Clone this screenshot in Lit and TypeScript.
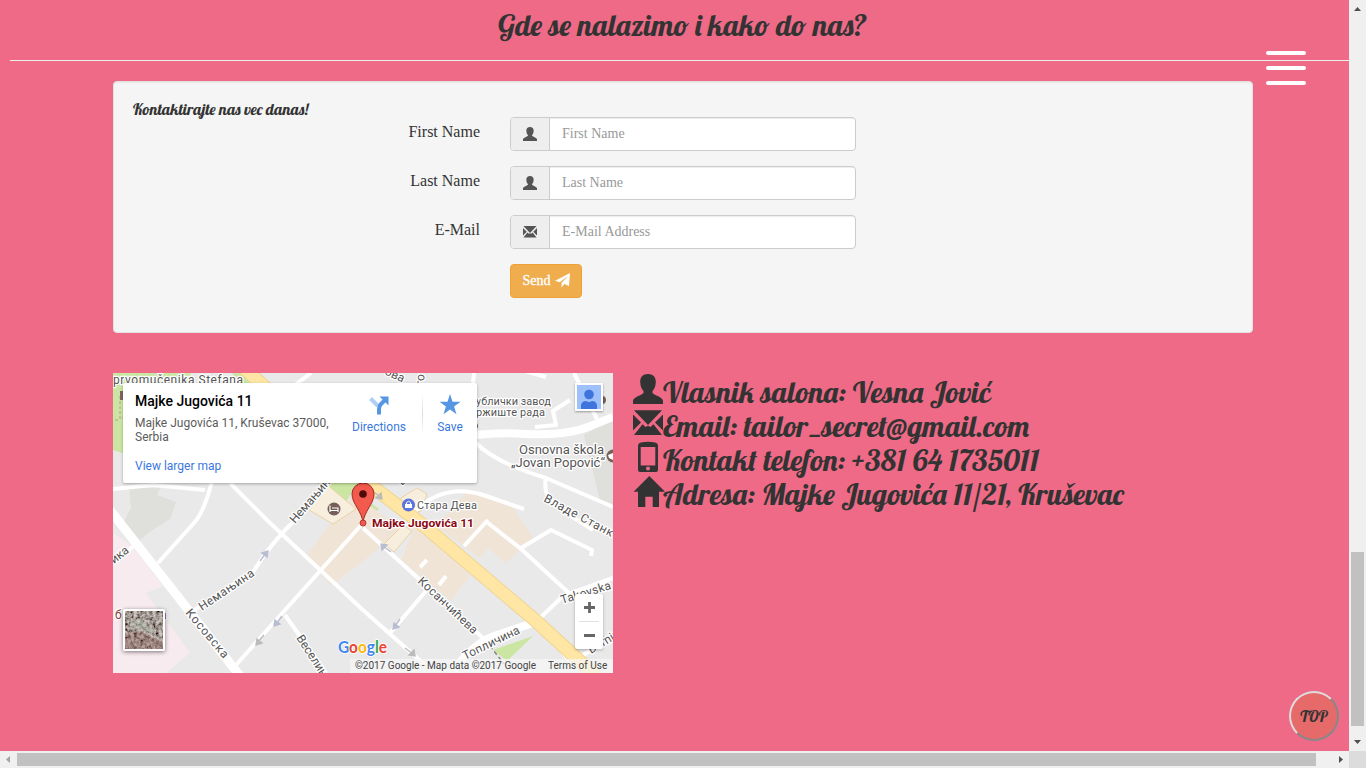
import { LitElement, html, svg, css } from "lit";
import { customElement } from "lit/decorators.js";

const userIcon = svg`<path d="M15 0C20 0 22.800 3 22.800 7.500C22.800 12 21.500 15 19.500 17V19C19.500 20.500 30 23 30 27V30H0V27C0 23 10.500 20.500 10.500 19V17C8.500 15 7.200 12 7.200 7.500C7.200 3 10 0 15 0Z"/>`;
const mailIcon = svg`<path d="M1 2.2H29L15 17ZM0 6.5L8 14.5L0 22.5ZM30 6.5V22.5L22 14.5ZM1 27L9.5 16.3L12.6 19L15 17.8L17.4 19L20.5 16.3L29 27Z"/>`;
const phoneIcon = svg`<path fill-rule="evenodd" d="M8 .5Q15-.8 22 .5Q25 1.2 25 4V28Q25 30 23 30H7Q5 30 5 28V4Q5 1.2 8 .5ZM7.7 5V23.5H22.3V5ZM15 24.6A2 2 0 1 0 15 28.6A2 2 0 1 0 15 24.6Z"/>`;
const homeIcon = svg`<path d="M16.3 0L32 15.7H26V31H19.7V20.7H12.3V31H5V15.7H.6Z"/>`;

@customElement("street-map")
class StreetMap extends LitElement {
  static styles = css`
    :host { display: block; position: relative; width: 500px; height: 300px; overflow: hidden; font-family: Roboto, sans-serif; }
    .base { display: block; }
    .halo { paint-order: stroke; stroke: #fff; stroke-width: 2.5px; stroke-linejoin: round; }
    .card { position: absolute; left: 10px; top: 10px; width: 354px; height: 100px; box-sizing: border-box; padding: 10px 0 0 12px; background: #fff; border-radius: 2px; box-shadow: 0 1px 3px rgba(0,0,0,.3); display: flex; }
    .place { width: 203px; font-size: 12px; line-height: 14px; color: #5b5b5b; }
    .name { font-size: 14px; line-height: 17px; font-weight: 500; color: #000; margin-bottom: 6px; }
    .link { color: #3a78e0; }
    .more { margin-top: 15px; }
    .act { width: 82px; display: flex; flex-direction: column; align-items: center; font-size: 12px; line-height: 14px; color: #3a78e0; }
    .act svg { margin: 1px 0 5px; }
    .save { width: 54px; }
    .rule { width: 1px; height: 42px; margin-left: 2px; background: linear-gradient(#fff, #ddd 50%, #fff); }
    .avatar { position: absolute; left: 462px; top: 10px; border: 2px solid #fff; box-shadow: 0 1px 2px rgba(0,0,0,.35); }
    .avatar svg, .sat svg { display: block; }
    .sat { position: absolute; left: 10px; top: 236px; border: 2px solid #fff; border-radius: 2px; box-shadow: 0 1px 4px rgba(0,0,0,.5); }
    .zoom { position: absolute; left: 462px; top: 221px; width: 28px; height: 55px; background: #fff; border-radius: 2px; box-shadow: 0 1px 3px rgba(0,0,0,.3); }
    .legal { position: absolute; right: 0; bottom: 0; height: 14px; display: flex; background: rgba(245,245,245,.75); font-size: 10px; line-height: 14px; color: #444; white-space: nowrap; }
    .legal span { box-sizing: border-box; padding-left: 5px; width: 192px; }
    .legal .terms { width: 71px; padding-left: 6px; }
  `;
  render() {
    return html`
      <svg class="base" width="500" height="300" viewBox="0 0 500 300">
        <rect width="500" height="300" fill="#e9e9e9"/>
        <path fill="#f8ebf0" d="M0 160L18 172L50 213L33 220L77 280L53 300H0Z"/>
        <path fill="#cbe6a3" d="M0 0H78L72 12H12V81L0 77ZM119 0H130L142 12H128ZM204 110H245L232 130Z"/>
        <path fill="#cbe6a3" d="M253 126L266 136L253 147ZM380 277L420 263L394 288ZM424 245L433 249L462 274L456 275Z"/>
        <path fill="#dfe0db" d="M16 115H47L44 122L63 129L57 146L38 158L25 169L10 150L18 135ZM471 62L500 46V132H488Z"/>
        <path fill="#f0e4d7" d="M240 120L290 157L218 213L193 183ZM304 148L357 203L338 228L288 187ZM335 140L357 116L400 135L420 165L393 190L375 175L367 185L322 152Z"/>
        <path fill="#f7eede" stroke="#ead4a8" d="M212 110L243 136L220 151L196 137ZM288 125L304 115L314 121L308 138L289 145ZM271 171L290 152L299 158L281 179Z"/>
        <g fill="none" stroke="#fff" stroke-width="4" stroke-linejoin="round">
          <path stroke-width="9" d="M-3 137L8 151L127 303"/>
          <path d="M0 116L40 112L92 117M99 108Q91 140 80 151L45 190M117 110L157 150L250 237L312 292M80 238L140 199Q158 170 182 147L216 109"/>
          <path d="M123 292L207 198L250 150M172 242L213 300M250 155L307 207L370 265M313 218L277 260L272 257M0 190L22 172M182 12L198 0"/>
          <path stroke-width="8" d="M340 298Q360 271 381 263L423 249"/>
          <path d="M423 249L450 223L500 205M375 150L407 175L457 221M351 173L375 147M408 175L438 157L479 177L478 183M445 274L458 290L500 263"/>
          <path stroke-width="8" d="M358 63Q380 59 413 61Q455 63 480 52L500 44"/>
          <path d="M363 70Q383 90 433 105L500 134M433 103Q429 126 447 136L480 157M422 54L443 52L440 38L457 27M461 0L484 46M360 10L361 0M412-2L433 4M293 145L308 133Q335 111 370 122L411 136M307 194L314 187M326 212L333 203"/>
        </g>
        <path fill="none" stroke="#f0d492" stroke-width="14" d="M130-6L260 114L310 152L423 248L485 305"/>
        <path fill="none" stroke="#ffe6a4" stroke-width="12" d="M130-6L260 114L310 152L423 248L485 305"/>
        <path d="M377 273L391 291" stroke="#888" stroke-width="1.5" stroke-dasharray="4 3"/>
        <g fill="#b9bdd2" stroke="#b9bdd2" stroke-width="1.4">
          <path d="M147 188L153 180M149 180L155 178L154 184ZM169 243L163 251M167 251L161 253L162 247ZM287 246L282 253M286 254L280 256L281 250ZM278 179L270 173M269 177L268 171L274 172Z"/>
          <path stroke="#bbb" fill="#bbb" d="M151 262L145 269M149 270L143 272L144 266ZM292 275L300 281M301 277L302 283L296 282ZM261 119L267 124M268 120L269 126L263 125Z"/>
        </g>
        <path d="M12 17V45M7 23V47M2 47H7M12 45H7" stroke="#b5a386" stroke-dasharray="3 2" fill="none"/>
        <rect x="7" y="18" width="6" height="9" fill="#806560"/>
        <g class="halo" font-size="12" fill="#555">
          <text x="0" y="11" textLength="130">prvomučenika Stefana</text>
          <text font-size="11" x="363" y="32" textLength="75">ублички завод</text>
          <text font-size="11" x="363" y="43" textLength="69">ржиште рада</text>
          <text x="406" y="81" textLength="85" lengthAdjust="spacingAndGlyphs">Osnovna škola</text>
          <text x="398" y="94" textLength="94" lengthAdjust="spacingAndGlyphs">„Jovan Popović“</text>
          <text font-size="11" x="304" y="136" textLength="60">Стара Дева</text>
          <text transform="translate(182 151) rotate(-49)">Немањина</text>
          <text transform="translate(89 238) rotate(-34)" textLength="64">Немањина</text>
          <text transform="translate(72 240) rotate(50)" textLength="60">Косовска</text>
          <text transform="translate(183 265) rotate(57)">Веселинова</text>
          <text transform="translate(304 209) rotate(43)" textLength="77">Косанчићева</text>
          <text transform="translate(352 287) rotate(-26)" textLength="62">Топличина</text>
          <text transform="translate(430 128) rotate(28)" textLength="77">Владе Станк</text>
          <text transform="translate(449 231) rotate(-17)" textLength="52">Takovska</text>
          <text transform="translate(478 281) rotate(-31)">Darnina</text>
          <text transform="translate(1 191) rotate(-38)">ика</text>
          <text x="2" y="246" fill="#8a463d">б</text><text x="47" y="246" fill="#8a463d">а</text>
          <text transform="translate(271 1) rotate(25)">ова</text>
          <text transform="translate(310 20) rotate(-85)">ого</text>
          <text transform="translate(289 113) rotate(-45)">В</text>
        </g>
        <g fill="#765f59"><circle cx="221" cy="136" r="6.5"/><circle cx="500" cy="83" r="6.5"/><circle cx="489" cy="27" r="4"/><circle cx="362" cy="53" r="3"/></g>
        <path d="M217 132.500V139M217 137.500H225V139M219 135H225V137" fill="none" stroke="#fff" stroke-width="1.2"/>
        <path d="M495 82L500 80V87L496 85Z" fill="#fff"/>
        <circle cx="295.500" cy="132" r="6.500" fill="#5b72df"/>
        <path d="M292 131H299V135H292Z" fill="#fff"/><path d="M293.500 131V129.500Q295.500 127 297.500 129.500V131" fill="none" stroke="#fff"/>
        <path d="M250 150C249 138 239 131 239 121A11 11 0 0 1 261 121C261 131 251 138 250 150Z" fill="#f25a4e" stroke="#a32b25"/>
        <circle cx="250" cy="121" r="3.800" fill="#4d0b0b"/>
        <circle cx="250" cy="150" r="3" fill="#f05a50" stroke="#b83a32"/>
        <text class="halo" x="259" y="154" font-size="11.500" font-weight="700" fill="#8b0a12" textLength="102" lengthAdjust="spacingAndGlyphs">Majke Jugovića 11</text>
        <g font-family="Lato, sans-serif" font-size="17" font-weight="700" stroke="#fff" stroke-width="1.500" paint-order="stroke">
          <text x="225" y="280" textLength="49" lengthAdjust="spacingAndGlyphs"><tspan fill="#4285f4">G</tspan><tspan fill="#ea4335">o</tspan><tspan fill="#fbbc05">o</tspan><tspan fill="#4285f4">g</tspan><tspan fill="#34a853">l</tspan><tspan fill="#ea4335">e</tspan></text>
        </g>
      </svg>
      <div class="card">
        <div class="place">
          <div class="name">Majke Jugovića 11</div>
          <div>Majke Jugovića 11, Kruševac 37000, Serbia</div>
          <div class="link more">View larger map</div>
        </div>
        <div class="act">
          <svg width="22" height="21" viewBox="0 0 22 21"><path d="M2.500 4.500L10 12" stroke="#afcff5" stroke-width="4"/><path d="M11 20.500V15Q11 12 13 10L17 6" fill="none" stroke="#5796e3" stroke-width="4"/><path d="M11.500 2.500H20.500V11.500Z" fill="#5796e3"/></svg>
          Directions
        </div>
        <div class="rule"></div>
        <div class="act save">
          <svg width="22" height="21" viewBox="0 0 22 21"><path fill="#5796e3" d="M11 0L13.500 7.700H21.500L15.100 12.500L17.500 20.200L11 15.500L4.500 20.200L6.900 12.500L.5 7.700H8.500Z"/></svg>
          Save
        </div>
      </div>
      <div class="avatar"><svg width="24" height="24"><rect width="24" height="24" fill="#9ec0fb"/><circle cx="12" cy="9.500" r="4.800" fill="#3f74dc"/><path d="M4 24V20Q5 16 9 16Q12 18 15 16Q19 16 20 20V24Z" fill="#3f74dc"/></svg></div>
      <div class="sat"><svg width="38" height="38">
        <filter id="grain"><feTurbulence type="fractalNoise" baseFrequency=".32" numOctaves="4" seed="4"/><feColorMatrix values="1.100 0 0 0 -.18 1.050 0 0 0 -.2 1 0 0 0 -.2 0 0 0 0 1"/></filter>
        <rect width="38" height="38" fill="#81716a"/><rect width="38" height="38" filter="url(#grain)"/>
        <path d="M0 23L15 20L38 31V38H0Z" fill="#884e48" opacity=".3"/><path d="M4 10L16 7L32 23L25 21L17 18L10 17Z" fill="#b4beb0" opacity=".5"/>
      </svg></div>
      <div class="zoom"><svg width="28" height="55"><path d="M9 13.500H20M14.500 8V19M9 41.500H20" stroke="#666" stroke-width="2.800"/><path d="M4 27.500H24" stroke="#e0e0e0"/></svg></div>
      <div class="legal"><span>©2017 Google - Map data ©2017 Google</span><span class="terms">Terms of Use</span></div>
    `;
  }
}

@customElement("app-root")
class AppRoot extends LitElement {
  static styles = css`
    :host { display: grid; grid-template: 751px 17px / 1349px 17px; position: relative; width: 1366px; height: 768px; overflow: hidden; font-family: "Liberation Serif", serif; color: #333; }
    .page { background: #ee6a86; overflow: hidden; }
    .head, .lead, .line, .top { font-family: Lobster, cursive; font-weight: 400; white-space: nowrap; }
    .head { box-sizing: border-box; margin: 0 0 0 10px; padding: 9px 0 0 488px; height: 61px; border-bottom: 1px solid #eee; font-size: 30px; line-height: 33px; }
    .well { box-sizing: border-box; width: 1140px; height: 252px; margin: 20px 0 0 113px; padding: 19px; background: #f5f5f5; border: 1px solid #e3e3e3; border-radius: 4px; box-shadow: inset 0 1px 1px rgba(0,0,0,.05); }
    .lead { font-size: 16px; line-height: 17px; height: 17px; }
    .form { display: grid; grid-template-columns: 347px 346px; column-gap: 30px; row-gap: 15px; margin-top: -1px; }
    .label { text-align: right; font-size: 16px; line-height: 20px; padding-top: 5px; }
    .group { display: flex; box-sizing: border-box; height: 34px; border: 1px solid #ccc; border-radius: 4px; background: #fff; overflow: hidden; }
    .addon { width: 38px; background: #eee; border-right: 1px solid #ccc; display: flex; align-items: center; justify-content: center; fill: #555; }
    .input { flex: 1; padding: 6px 12px; font-size: 14px; line-height: 20px; color: #999; box-shadow: inset 0 1px 1px rgba(0,0,0,.075); }
    .btn { grid-column: 2; width: 72px; height: 34px; box-sizing: border-box; border: 1px solid #eea236; border-radius: 4px; background: #f0ad4e; color: #fff; font: 400 14px/20px "Liberation Serif", serif; -webkit-text-stroke: .3px #fff; display: flex; align-items: center; justify-content: center; gap: 4px; padding: 0; }
    .btn svg { margin-top: -2px; }
    .lower { display: flex; gap: 20px; margin: 40px 0 0 113px; }
    .row { display: flex; height: 34px; padding-top: 1px; box-sizing: border-box; }
    .ico { width: 30px; height: 32px; overflow: visible; fill: #333; }
    .line { font-size: 30px; line-height: 36px; }
    .bars { position: absolute; left: 1266px; top: 51px; display: grid; gap: 11px; }
    .bars i { width: 40px; height: 4px; border-radius: 2px; background: #fff; }
    .top { position: absolute; left: 1289px; top: 691px; width: 50px; height: 50px; box-sizing: border-box; border: 2px solid #888; border-top-color: #ddd; border-left-color: #ddd; border-radius: 50%; background: #e66a69; display: flex; align-items: center; justify-content: center; font-size: 16px; }
    .vbar, .hbar { background: #f0f0f0; display: flex; align-items: center; }
    .vbar { flex-direction: column; }
    .vbar svg, .hbar svg { flex: none; fill: #505050; }
    .vthumb { width: 13px; height: 174px; margin-top: 535px; background: #c1c1c1; }
    .hthumb { width: 1299px; height: 13px; background: #c1c1c1; }
    .corner { background: #dcdcdc; }
  `;
  field(label: string, hint: string, icon: unknown) {
    return html`<div class="label">${label}</div>
      <div class="group"><div class="addon"><svg width="14" height="14" viewBox="0 0 30 30">${icon}</svg></div><div class="input">${hint}</div></div>`;
  }
  contact(icon: unknown, text: string) {
    return html`<div class="row"><svg class="ico" viewBox="0 0 30 32">${icon}</svg><span class="line">${text}</span></div>`;
  }
  render() {
    return html`
      <main class="page">
        <div class="head">Gde se nalazimo i kako do nas?</div>
        <section class="well">
          <div class="lead">Kontaktirajte nas vec danas!</div>
          <div class="form">
            ${this.field("First Name", "First Name", userIcon)}
            ${this.field("Last Name", "Last Name", userIcon)}
            ${this.field("E-Mail", "E-Mail Address", mailIcon)}
            <button class="btn">Send <svg width="15" height="15"><path fill="#fff" d="M15 0L14 13L9.400 11L6.500 14.500V10L13 3L4.700 9.300L0 7.700Z"/></svg></button>
          </div>
        </section>
        <section class="lower">
          <street-map></street-map>
          <div>
            ${this.contact(userIcon, "Vlasnik salona: Vesna Jović")}
            ${this.contact(mailIcon, "Email: tailor_secret@gmail.com")}
            ${this.contact(phoneIcon, "Kontakt telefon: +381 64 1735011")}
            ${this.contact(homeIcon, "Adresa: Majke Jugovića 11/21, Kruševac")}
          </div>
        </section>
      </main>
      <div class="vbar">
        <svg width="17" height="17"><path d="M5 11H12L8.500 7Z"/></svg>
        <div class="vthumb"></div>
        <svg width="17" height="25"><path d="M5 14H12L8.500 18Z"/></svg>
      </div>
      <div class="hbar">
        <svg width="17" height="17"><path fill="#a3a3a3" d="M10 5V12L6 8.500Z"/></svg>
        <div class="hthumb"></div>
        <svg width="33" height="17"><path d="M23 5V12L27 8.500Z"/></svg>
      </div>
      <div class="corner"></div>
      <div class="bars"><i></i><i></i><i></i></div>
      <div class="top">TOP</div>
    `;
  }
}
